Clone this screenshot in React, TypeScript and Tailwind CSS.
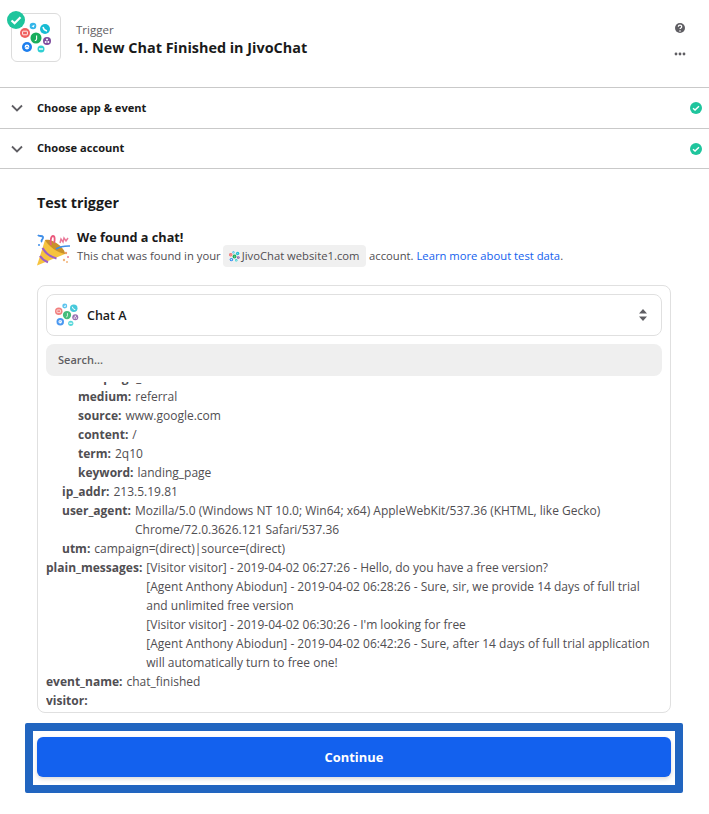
import React from "react";

function Jivo({ size, muted }: { size: number; muted?: boolean }) {
  return (
    <svg width={size} height={size} viewBox="0 0 32 32" opacity={muted ? 0.8 : 1}>
      <circle cx="5" cy="11" r="5" fill="#f0605f" />
      <rect x="2.6" y="9.2" width="4.8" height="3.6" rx="0.6" fill="none" stroke="#fff" strokeWidth="0.9" />
      <circle cx="13" cy="4" r="3.3" fill="#35b6ea" />
      <path d="M11.5 4.2L14.6 2.8 13.8 5.6z" fill="#fff" />
      <circle cx="25" cy="7" r="5" fill="#18bcd3" />
      <path d="M23 5c.4 2 1.800 3.400 4 4" stroke="#fff" strokeWidth="1.4" fill="none" />
      <circle cx="16" cy="16" r="5.5" fill="#18ad5c" />
      <path d="M16.6 13.500v3.500c0 1.200-.8 1.600-1.800 1.600" stroke="#fff" strokeWidth="1.1" fill="none" />
      <circle cx="27" cy="19" r="4" fill="#7e4c9e" />
      <circle cx="25.700" cy="20" r="1" fill="#fff" />
      <circle cx="28.300" cy="20" r="1" fill="#fff" />
      <circle cx="27" cy="17.600" r="1" fill="#fff" />
      <circle cx="7" cy="25" r="5" fill="#1d7fee" />
      <circle cx="7" cy="25" r="2.400" fill="#fff" />
      <path d="M5.600 25.500l1.400-1.300 1.400 1.300" stroke="#1d7fee" strokeWidth="0.8" fill="none" />
      <circle cx="21" cy="27" r="3.500" fill="#2fcfd2" />
      <rect x="19" y="26.300" width="4" height="1.400" fill="#fff" />
    </svg>
  );
}

function Check({ size }: { size: number }) {
  return (
    <svg width={size} height={size} viewBox="0 0 20 20">
      <circle cx="10" cy="10" r="10" fill="#1fc59d" />
      <path d="M5 10.500l3.400 3L15 7" stroke="#fff" strokeWidth="2.400" fill="none" />
    </svg>
  );
}

function Chevron() {
  return (
    <svg width="12" height="8" viewBox="0 0 12 8" className="shrink-0">
      <path d="M1 1.500l5 5 5-5" stroke="#5f5e63" strokeWidth="1.800" fill="none" />
    </svg>
  );
}

function Popper() {
  return (
    <svg width="33" height="33" viewBox="0 0 33 33" className="shrink-0">
      <path d="M0 31.500L8 6C16 6 24 13 28 20z" fill="#f6c33e" />
      <path d="M8 6c6-2 20 7 20 14-7-1-17-8-20-14z" fill="#c9902a" />
      <path d="M5.500 14c3 5 8 9 14 10.500" stroke="#9a5fc9" strokeWidth="2.200" fill="none" />
      <path d="M3 22c2 3 4.500 5 8 6.300" stroke="#9a5fc9" strokeWidth="2.200" fill="none" />
      <path d="M1 1c1 2 4 0 5 2s-3 3-1 5" stroke="#3f8ee8" strokeWidth="1.800" fill="none" />
      <path d="M14 11c-1-4 0-9 2-9s2 4 1 7" stroke="#ea5a7d" strokeWidth="1.800" fill="none" />
      <path d="M23 9l1-4 2 3 1-4 2 3 2-3" stroke="#ea7a9a" strokeWidth="1.500" fill="none" />
      <path d="M19 15c4-2.500 8-3.200 14-3" stroke="#3f8ee8" strokeWidth="1.600" fill="none" />
      <circle cx="29" cy="19" r="1.200" fill="#ef9a6a" />
      <circle cx="31" cy="23" r="1" fill="#ea7a9a" />
      <circle cx="27" cy="26" r="1.200" fill="#f2b47a" />
      <circle cx="30" cy="28" r="1" fill="#f2b47a" />
      <circle cx="2" cy="11" r="1" fill="#3f8ee8" />
    </svg>
  );
}

function Row({ children, tall }: { children: React.ReactNode; tall?: boolean }) {
  return (
    <div className={`${tall ? "h-[41px]" : "h-10"} border-b border-[#c9c9c9] pl-[11px] pr-[7px] flex items-center`}>
      <Chevron />
      <span className="ml-[14px] flex-1 text-[11.1px] font-bold text-[#1a1a1a]">{children}</span>
      <Check size={12} />
    </div>
  );
}

function Kv({ k, v, indent }: { k: string; v: React.ReactNode; indent: string }) {
  return (
    <div className={`flex gap-[4px] ${indent}`}>
      <span className="font-bold text-[#504e52] shrink-0">{k}:</span>
      <span>{v}</span>
    </div>
  );
}

export default function App() {
  return (
    <div className="w-[709px] h-[814px] bg-white font-['Open_Sans',sans-serif] text-[#504e52] overflow-hidden">
      <header className="h-[88px] border-b border-[#c9c9c9] relative flex items-start pl-[11px] pr-[23px] pt-[13px]">
        <div className="w-[50px] h-[49px] rounded-[6px] border border-[#dcdcdc] flex items-center justify-center relative shrink-0">
          <Jivo size={32} />
          <div className="absolute left-[-5px] top-[-3px]">
            <Check size={18} />
          </div>
        </div>
        <div className="ml-[15px] flex-1 pt-[9px]">
          <div className="text-[11.5px] leading-[16px] text-[#5f5e63]">Trigger</div>
          <div className="text-[14.4px] leading-[20px] font-bold text-[#1a1a1a]">1. New Chat Finished in JivoChat</div>
        </div>
        <div className="flex flex-col items-center gap-[18px] pt-[9px] w-[12px]">
          <svg width="12" height="12" viewBox="0 0 12 12">
            <circle cx="6" cy="6" r="5" fill="#5f5e63" />
            <path d="M4.300 4.700c0-2.200 3.400-2.200 3.400 0 0 1.200-1.700 1.200-1.700 2.400" stroke="#fff" strokeWidth="1.200" fill="none" />
            <circle cx="6" cy="9" r=".8" fill="#fff" />
          </svg>
          <svg width="12" height="4" viewBox="0 0 12 4">
            <circle cx="2" cy="2" r="1.400" fill="#5f5e63" />
            <circle cx="6" cy="2" r="1.400" fill="#5f5e63" />
            <circle cx="10" cy="2" r="1.400" fill="#5f5e63" />
          </svg>
        </div>
      </header>
      <Row tall>Choose app &amp; event</Row>
      <Row>Choose account</Row>

      <main className="pl-[37px] pr-[38px] pt-[24px]">
        <h2 className="text-[14.3px] leading-[20px] font-bold text-[#1a1a1a]">Test trigger</h2>
        <div className="mt-[21px] flex gap-[7px] h-[33px]">
          <Popper />
          <div>
            <div className="text-[12.7px] leading-[16px] mt-[-5px] font-bold text-[#1a1a1a]">We found a chat!</div>
            <div className="text-[11.25px] leading-[22px] flex items-center whitespace-nowrap">
              <span>This chat was found in your</span>
              <span className="ml-[2px] mr-[3px] h-[22px] bg-[#f0f0f0] rounded-[4px] pl-[6px] pr-[6.5px] flex items-center">
                <span className="mr-[2px] flex"><Jivo size={11} /></span>
                JivoChat website1.com
              </span>
              <span>account.&nbsp;</span>
              <span className="text-[#1361ee]">Learn more about test data</span>
              <span>.</span>
            </div>
          </div>
        </div>

        <section className="mt-[18px] h-[428px] border border-[#e0e0e0] rounded-[8px] px-[8px] pt-[8px] overflow-hidden">
          <div className="h-[42px] border border-[#e0e0e0] rounded-[8px] pl-[8px] pr-[13px] flex items-center">
            <Jivo size={24} muted />
            <span className="ml-[8px] pt-[2px] flex-1 text-[12.5px] font-semibold text-[#1a1a1a]">Chat A</span>
            <svg width="10" height="14" viewBox="0 0 10 14">
              <path d="M5 1l4 4.500H1zM5 13l4-4.500H1z" fill="#5f5e63" />
            </svg>
          </div>
          <div className="mt-[8px] h-[32px] bg-[#efefef] rounded-[8px] px-[12px] flex items-center text-[11px] font-semibold text-[#5f5e63]">
            Search...
          </div>
          <div className="mt-[6px] h-[323px] overflow-hidden text-[12px] leading-[19px] text-[#504e52]">
            <div className="mt-[-14px]">
              <Kv k="campaign_name" v="" indent="pl-[32px]" />
              <Kv k="medium" v="referral" indent="pl-[32px]" />
              <Kv k="source" v="www.google.com" indent="pl-[32px]" />
              <Kv k="content" v="/" indent="pl-[32px]" />
              <Kv k="term" v="2q10" indent="pl-[32px]" />
              <Kv k="keyword" v="landing_page" indent="pl-[32px]" />
              <Kv k="ip_addr" v="213.5.19.81" indent="pl-[16px]" />
              <Kv
                k="user_agent"
                v={<>Mozilla/5.0 (Windows NT 10.0; Win64; x64) AppleWebKit/537.36 (KHTML, like Gecko)<br />Chrome/72.0.3626.121 Safari/537.36</>}
                indent="pl-[16px]"
              />
              <Kv k="utm" v="campaign=(direct)|source=(direct)" indent="pl-[16px]" />
              <Kv
                k="plain_messages"
                v={
                  <>
                    [Visitor visitor] - 2019-04-02 06:27:26 - Hello, do you have a free version?<br />
                    [Agent Anthony Abiodun] - 2019-04-02 06:28:26 - Sure, sir, we provide 14 days of full trial<br />
                    and unlimited free version<br />
                    [Visitor visitor] - 2019-04-02 06:30:26 - I'm looking for free<br />
                    [Agent Anthony Abiodun] - 2019-04-02 06:42:26 - Sure, after 14 days of full trial application<br />
                    will automatically turn to free one!
                  </>
                }
                indent=""
              />
              <Kv k="event_name" v="chat_finished" indent="" />
              <Kv k="visitor" v="" indent="" />
            </div>
          </div>
        </section>
      </main>

      <div className="mt-[10px] ml-[25px] w-[658px] h-[70px] border-[8px] border-[#2165c0] rounded-[2px] bg-white px-[4px] pt-[6px]">
        <button className="w-full h-[40px] pt-[1px] rounded-[6px] bg-[#1361ee] text-white text-[12.9px] font-bold shadow-[0_2px_4px_rgba(0,0,0,0.15)]">
          Continue
        </button>
      </div>
    </div>
  );
}
